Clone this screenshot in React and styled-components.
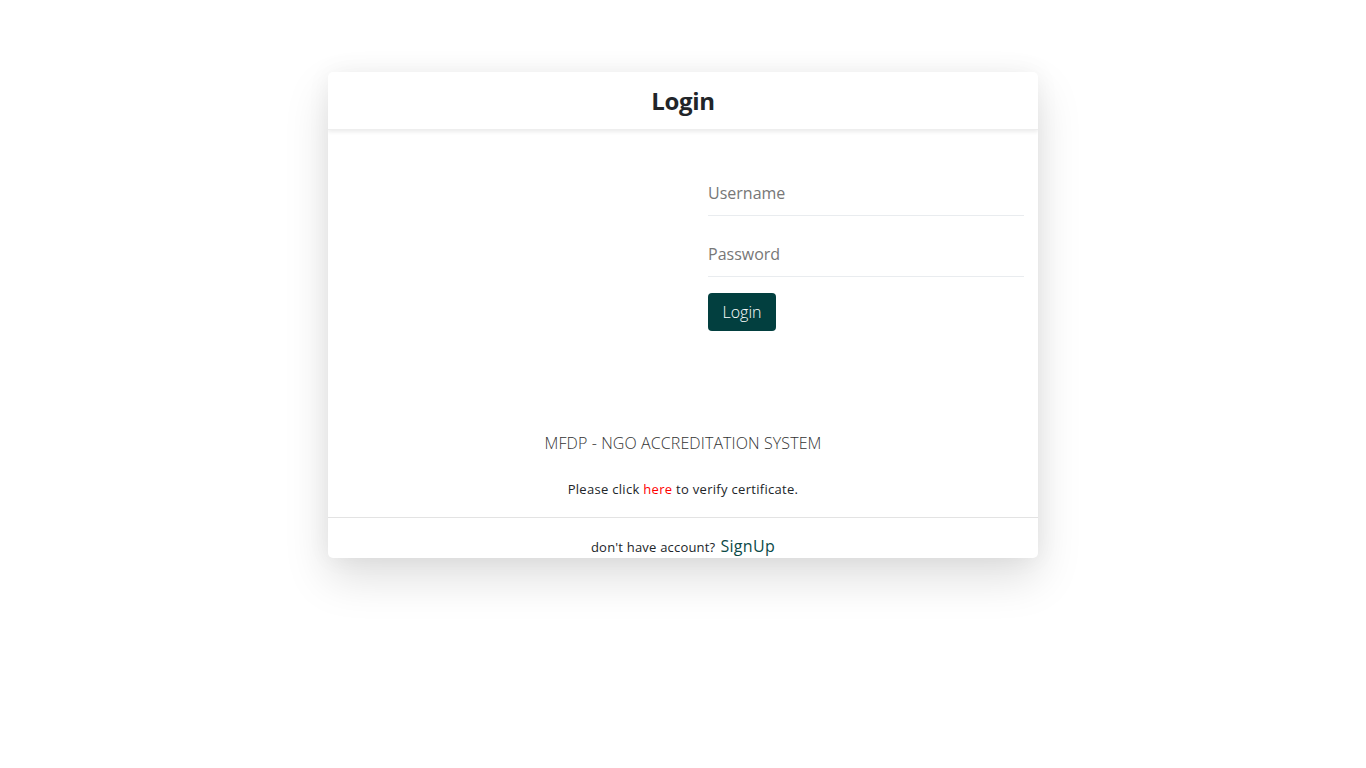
import React from 'react';
import styled, { createGlobalStyle } from 'styled-components';

const GlobalStyle = createGlobalStyle`
  * { box-sizing: border-box; }
  body {
    margin: 0;
    background: #fff;
    font-family: "Open Sans", "Liberation Sans", sans-serif;
    color: #212529;
  }
`;

const Page = styled.div`
  display: flex;
  justify-content: center;
  padding-top: 72px;
  min-height: 768px;
`;

const Card = styled.div`
  width: 710px;
  height: 486px;
  background: #fff;
  border-radius: 5px;
  overflow: hidden;
  box-shadow: 0 20px 45px rgba(0, 0, 0, 0.13), 0 0 25px rgba(0, 0, 0, 0.05);
  display: flex;
  flex-direction: column;
`;

const Header = styled.div`
  height: 58px;
  display: flex;
  align-items: center;
  justify-content: center;
  box-shadow: 0 2px 4px rgba(0, 0, 0, 0.08);
  border-bottom: 1px solid #eee;
`;

const Title = styled.h1`
  margin: 0;
  font-size: 24px;
  font-weight: 700;
  color: #212529;
  letter-spacing: -0.3px;
`;

const Body = styled.div`
  flex: 1;
  display: flex;
  flex-direction: column;
  padding-top: 41px;
`;

const Row = styled.div`
  display: grid;
  grid-template-columns: 355px 1fr;
`;

const Form = styled.div`
  display: flex;
  flex-direction: column;
  gap: 16px;
  padding: 0 14px 0 25px;
`;

const Input = styled.input`
  height: 45px;
  border: none;
  border-bottom: 1px solid #e9ecef;
  padding: 0;
  font-family: inherit;
  font-size: 16px;
  color: #495057;
  background: none;
  &::placeholder { color: #777; }
  &:focus { outline: none; }
`;

const Button = styled.button`
  align-self: flex-start;
  height: 38px;
  padding: 0 14.5px;
  border: none;
  border-radius: 4px;
  background: #023f3f;
  color: #fff;
  font-family: inherit;
  font-size: 16px;
  font-weight: 300;
  cursor: pointer;
`;

const System = styled.p`
  margin: 100px 0 0;
  text-align: center;
  font-size: 16px;
  font-weight: 300;
  line-height: 24px;
  color: #333;
  letter-spacing: 0.1px;
`;

const Verify = styled.p`
  margin: 24px 0 0;
  text-align: center;
  font-size: 13px;
  line-height: 20px;
  color: #212529;
  letter-spacing: 0.3px;
`;

const Red = styled.a`
  color: #f00;
  text-decoration: none;
`;

const Footer = styled.div`
  border-top: 1px solid #e3e3e3;
  height: 41px;
  display: flex;
  align-items: flex-end;
  justify-content: center;
  gap: 5px;
  font-size: 13px;
  color: #212529;
  padding-bottom: 2px;
  letter-spacing: 0.2px;
`;

const SignUp = styled.a`
  font-size: 16px;
  color: #0b4a47;
  text-decoration: none;
  line-height: 20px;
  letter-spacing: 0.3px;
`;

export default function App() {
  return (
    <>
      <GlobalStyle />
      <Page>
        <Card>
          <Header>
            <Title>Login</Title>
          </Header>
          <Body>
            <Row>
              <div />
              <Form>
                <Input type="text" placeholder="Username" />
                <Input type="password" placeholder="Password" />
                <Button>Login</Button>
              </Form>
            </Row>
            <System>MFDP - NGO ACCREDITATION SYSTEM</System>
            <Verify>
              Please click <Red href="#">here</Red> to verify certificate.
            </Verify>
          </Body>
          <Footer>
            <span>don't have account?</span>
            <SignUp href="#">SignUp</SignUp>
          </Footer>
        </Card>
      </Page>
    </>
  );
}
